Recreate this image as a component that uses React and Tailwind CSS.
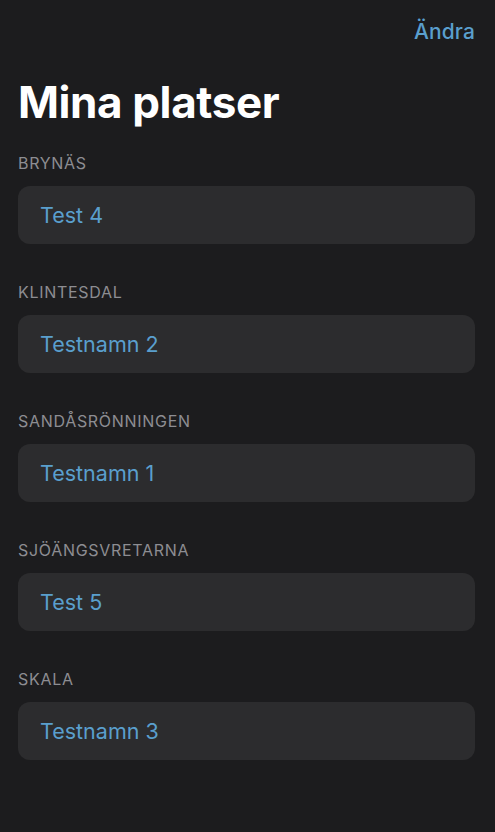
const places = [
    { area: "BRYNÄS", name: "Test 4" },
    { area: "KLINTESDAL", name: "Testnamn 2" },
    { area: "SANDÅSRÖNNINGEN", name: "Testnamn 1" },
    { area: "SJÖÄNGSVRETARNA", name: "Test 5" },
    { area: "SKALA", name: "Testnamn 3" },
];

export default function App() {
    return (
        <div
            className="min-h-[832px] w-full bg-[#1c1c1e] pl-[18px] pr-[20px]"
            style={{ fontFamily: "Inter, 'Noto Sans', sans-serif" }}
        >
            <div className="flex justify-end pt-[18px]">
                <button
                    type="button"
                    className="text-[21px] font-medium leading-[28px] tracking-[0.1px] text-[#5a9fcd]"
                >
                    Ändra
                </button>
            </div>
            <h1 className="mt-[30px] text-[44px] font-bold leading-[52px] tracking-[-0.4px] text-white">
                Mina platser
            </h1>
            <div className="mt-[25px] flex flex-col gap-[38px]">
                {places.map((place) => (
                    <div key={place.area}>
                        <div className="mb-[13px] text-[16px] leading-[20px] tracking-[0.7px] text-[#8d8d92]">
                            {place.area}
                        </div>
                        <div className="flex h-[58px] items-center rounded-[12px] bg-[#2c2c2e] px-[22px]">
                            <span className="text-[21.5px] text-[#5a9fcd]">{place.name}</span>
                        </div>
                    </div>
                ))}
            </div>
        </div>
    );
}
